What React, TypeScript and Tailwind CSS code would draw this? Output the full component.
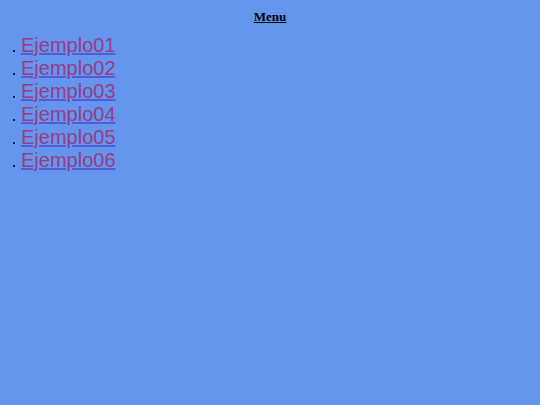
const ITEMS = ["Ejemplo01", "Ejemplo02", "Ejemplo03", "Ejemplo04", "Ejemplo05", "Ejemplo06"];

export default function App() {
  return (
    <div className="min-h-[405px] w-full bg-[#6495ed] pt-[9px]">
      <h1 className="text-center font-['Liberation_Serif',serif] text-[13px] font-bold leading-[15px] text-black underline">
        Menu
      </h1>
      <ul className="mt-[10px] pl-[13px]">
        {ITEMS.map((item) => (
          <li key={item} className="flex items-baseline h-[23px]">
            <span className="mr-[6px] inline-block h-[2px] w-[2px] rounded-full bg-black" />
            <a
              href="#"
              className="font-['Liberation_Sans',sans-serif] text-[20px] leading-[23px] text-[#983c86] underline decoration-[#5b5ad6]"
            >
              {item}
            </a>
          </li>
        ))}
      </ul>
    </div>
  );
}
